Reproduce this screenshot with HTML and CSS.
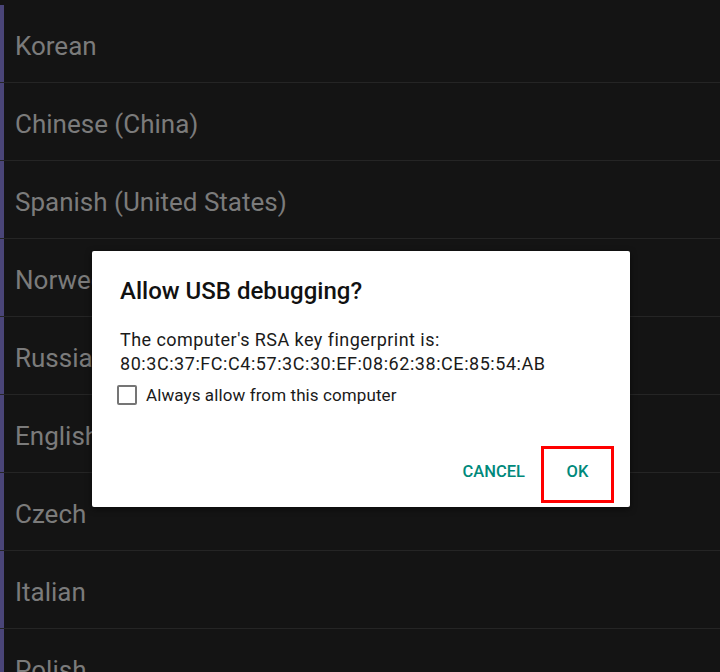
FILE: index.html
```html
<!DOCTYPE html>
<html>
<head>
<meta charset="utf-8">
<link rel="stylesheet" href="styles.css">
</head>
<body>
<div class="screen">
  <div class="list">
    <div class="row"><span class="bar"></span><span class="label">Korean</span></div>
    <div class="row"><span class="bar"></span><span class="label">Chinese (China)</span></div>
    <div class="row"><span class="bar"></span><span class="label">Spanish (United States)</span></div>
    <div class="row"><span class="bar"></span><span class="label">Norwegian</span></div>
    <div class="row"><span class="bar"></span><span class="label">Russian</span></div>
    <div class="row"><span class="bar"></span><span class="label">English</span></div>
    <div class="row"><span class="bar"></span><span class="label">Czech</span></div>
    <div class="row"><span class="bar"></span><span class="label">Italian</span></div>
    <div class="row"><span class="bar"></span><span class="label">Polish</span></div>
  </div>
  <div class="dialog">
    <h1 class="title">Allow USB debugging?</h1>
    <p class="message">The computer's RSA key fingerprint is:<br><span class="hex">80:3C:37:FC:C4:57:3C:30:EF:08:62:38:CE:85:54:AB</span></p>
    <label class="check"><span class="box"></span><span>Always allow from this computer</span></label>
    <div class="actions">
      <span class="btn">CANCEL</span>
      <span class="btn ok">OK</span>
    </div>
  </div>
</div>
</body>
</html>
```

FILE: styles.css
```css
html, body {
  margin: 0;
  padding: 0;
  background: #141414;
  font-family: Roboto, "Noto Sans", sans-serif;
}
.screen {
  position: relative;
  width: 720px;
  height: 672px;
  overflow: hidden;
}
.list {
  padding-top: 5px;
}
.row {
  display: flex;
  height: 77px;
  border-bottom: 1px solid #252525;
}
.bar {
  width: 4px;
  background: #4a4578;
  flex: none;
}
.label {
  align-self: center;
  padding-left: 11px;
  padding-top: 4px;
  font-size: 26px;
  color: #7b7b7b;
}
.dialog {
  position: absolute;
  left: 92px;
  top: 251px;
  width: 538px;
  height: 256px;
  box-sizing: border-box;
  background: #fff;
  border-radius: 2px;
  box-shadow: 0 2px 6px rgba(0,0,0,0.5);
  padding: 26px 28px 7px 28px;
  display: flex;
  flex-direction: column;
}
.title {
  margin: 0;
  font-size: 24px;
  font-weight: 500;
  color: #111;
  line-height: 28px;
}
.message {
  margin: 23px 0 0 0;
  font-size: 18px;
  line-height: 24px;
  letter-spacing: 0.45px;
  color: #1a1a1a;
}
.hex {
  letter-spacing: 0.55px;
}
.check {
  display: flex;
  align-items: center;
  margin-top: 9px;
  margin-left: -3px;
  font-size: 17px;
  letter-spacing: 0.1px;
  color: #1a1a1a;
  line-height: 20px;
}
.box {
  width: 16px;
  height: 16px;
  border: 2px solid #757575;
  border-radius: 2px;
  margin-right: 9px;
}
.actions {
  display: flex;
  justify-content: flex-end;
  align-items: center;
  margin-top: auto;
  margin-right: -9px;
}
.btn {
  font-size: 16.5px;
  font-weight: 500;
  color: #00897b;
  padding-bottom: 6px;
}
.ok {
  width: 67px;
  height: 51px;
  box-sizing: border-box;
  margin-left: 19px;
  display: flex;
  align-items: center;
  justify-content: center;
  outline: 3px solid #ff0000;
}
```
